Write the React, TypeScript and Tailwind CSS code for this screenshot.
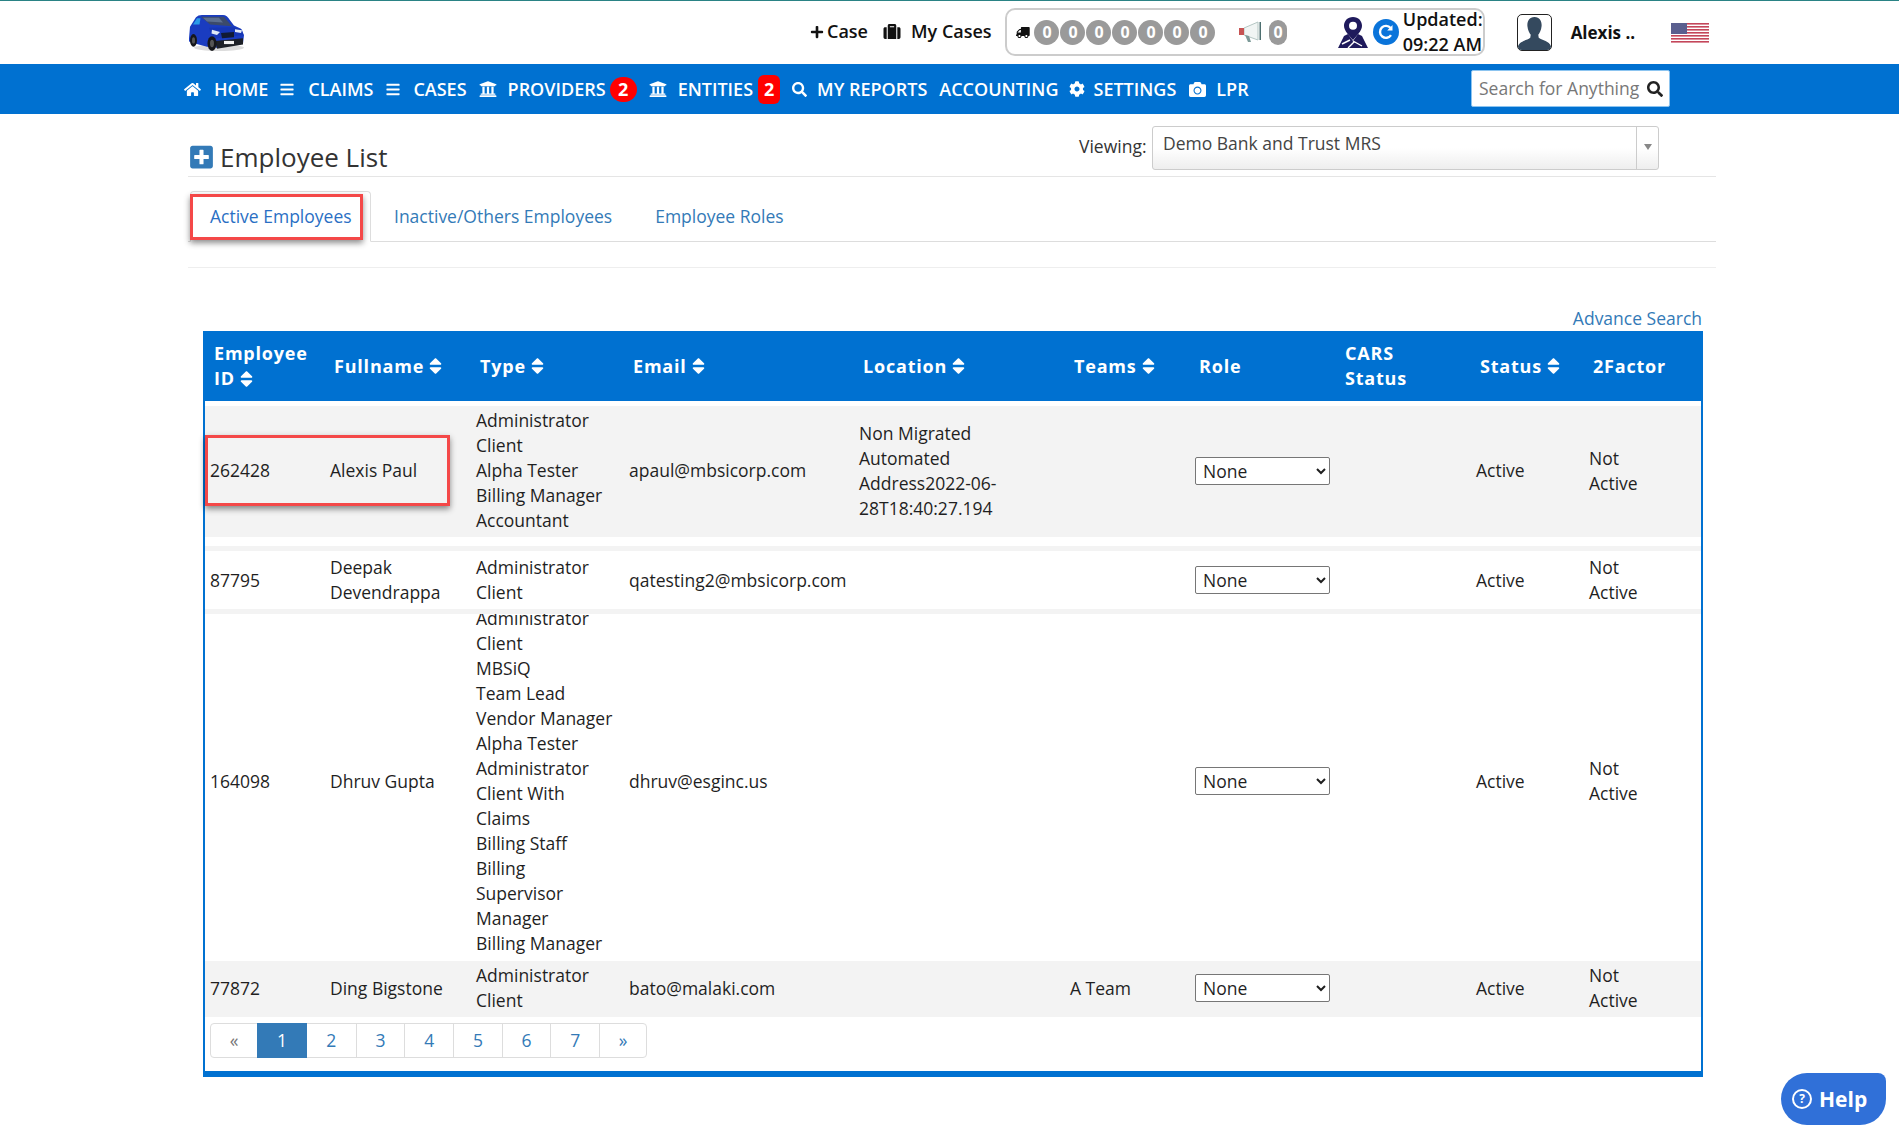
import { FaHome, FaBars, FaUniversity, FaSearch, FaCog, FaCamera, FaPlus, FaSuitcase, FaTruck, FaSort, FaPlusSquare } from 'react-icons/fa';

const rows = [
  {
    id: '262428',
    name: ['Alexis Paul'],
    types: ['Administrator', 'Client', 'Alpha Tester', 'Billing Manager', 'Accountant'],
    email: 'apaul@mbsicorp.com',
    location: ['Non Migrated', 'Automated', 'Address2022-06-', '28T18:40:27.194'],
    team: '',
    outer: 'h-[131px] bg-[#f3f3f3]',
    inner: 'h-[131px]',
  },
  {
    id: '87795',
    name: ['Deepak', 'Devendrappa'],
    types: ['Administrator', 'Client'],
    email: 'qatesting2@mbsicorp.com',
    location: [],
    team: '',
    outer: 'h-[58px] bg-white mt-[9px] border-y-[5px] border-[#f3f3f3] box-content',
    inner: 'h-[58px] pt-[2px]',
  },
  {
    id: '164098',
    name: ['Dhruv Gupta'],
    types: [
      'Administrator', 'Client', 'MBSiQ', 'Team Lead', 'Vendor Manager', 'Alpha Tester', 'Administrator',
      'Client With', 'Claims', 'Billing Staff', 'Billing', 'Supervisor', 'Manager', 'Billing Manager',
    ],
    email: 'dhruv@esginc.us',
    location: [],
    team: '',
    outer: 'h-[347px] bg-white overflow-hidden',
    inner: 'h-[358px] -mt-[11px]',
  },
  {
    id: '77872',
    name: ['Ding Bigstone'],
    types: ['Administrator', 'Client'],
    email: 'bato@malaki.com',
    location: [],
    team: 'A Team',
    outer: 'h-[56px] bg-[#f3f3f3]',
    inner: 'h-[56px]',
  },
];

const cols = 'grid grid-cols-[120px_146px_153px_230px_211px_125px_151px_130px_113px_117px]';

function Lines({ items }: { items: string[] }) {
  return (
    <div>
      {items.map((t, i) => (
        <div key={i}>{t}</div>
      ))}
    </div>
  );
}

function CarLogo() {
  return (
    <svg viewBox="0 0 58 36" preserveAspectRatio="none" className="w-[58px] h-[38px]">
      <ellipse cx="32" cy="32" rx="25" ry="3" fill="#dcdcdc" />
      <path d="M2 23 L3 12 L9 3 Q11 1 15 1 L36 1 Q40 1 43 6 L47 11 L54 14 L57 20 L56 28 L30 32 L20 31 L8 28 L2 26 Z" fill="#1a3cc0" />
      <path d="M14 2.5 L37 2.5 L45 11.5 L23 10 Z" fill="#3b4a6b" />
      <path d="M16 3.5 L32 3.5 L36 8 L20 7 Z" fill="#5c6f90" />
      <path d="M6 10 L10 4 L13.5 4 L12.5 10 Z" fill="#2b9be8" />
      <path d="M22 13 L47 12.5 L55 15 L56 20 L30 23 L24 20 Z" fill="#1636b4" />
      <path d="M25 15 L33 17 L30 20 L24.5 18.5 Z" fill="#dfe8f5" />
      <path d="M48 14.5 L55 15.5 L54 18 L48 17 Z" fill="#e4ecf7" />
      <path d="M34 18 L47 17 L47 22 L35 23 Z" fill="#111a33" />
      <path d="M28 25.5 L56 23 L56 29 L30 33 Z" fill="#1d2027" />
      <rect x="37" y="25.5" width="10" height="3" fill="#f2f2f2" />
      <ellipse cx="6.5" cy="25" rx="3.5" ry="6" fill="#15161a" />
      <ellipse cx="25" cy="28" rx="4.5" ry="7" fill="#15161a" />
      <ellipse cx="25" cy="28" rx="2" ry="3.5" fill="#555" />
      <ellipse cx="6.5" cy="25" rx="1.5" ry="3" fill="#555" />
    </svg>
  );
}

function Bullhorn() {
  return (
    <svg viewBox="0 0 24 22" className="w-[24px] h-[22px]">
      <path d="M6 7 L20 1 L20 19 L6 14 Z" fill="#f1f5f4" stroke="#b5c7c4" strokeWidth="1" />
      <rect x="1" y="7" width="5" height="7" fill="#c75454" />
      <rect x="21.5" y="1" width="1.5" height="18" fill="#4d6f70" />
      <path d="M7 14 L10 21 L13 21 L11 15 Z" fill="#7c9a98" />
    </svg>
  );
}

function MapPin() {
  return (
    <svg viewBox="0 0 30 31" className="w-[30px] h-[31px]">
      <path d="M15 0 C9.5 0 6 4 6 8.8 C6 14 11.5 19 15 23 C18.5 19 24 14 24 8.8 C24 4 20.5 0 15 0 Z" fill="#1f1a5c" />
      <circle cx="15" cy="8.8" r="4" fill="#fff" />
      <path d="M6 19 L10 17 L15 24 L20 17 L24 19 L30 31 L0 31 Z" fill="#1f1a5c" />
      <path d="M4 27 L12 23 M15 24 L24 29 M10 31 L16 25" stroke="#fff" strokeWidth="1.4" fill="none" />
    </svg>
  );
}

function Refresh() {
  return (
    <svg viewBox="0 0 26 26" className="w-[26px] h-[26px]">
      <circle cx="13" cy="13" r="13" fill="#0a74da" />
      <path d="M18 16.2 A6 6 0 1 1 17.6 9" stroke="#fff" strokeWidth="2.4" fill="none" />
      <path d="M19.5 6 L19.5 11.5 L14.2 11.5 Z" fill="#fff" />
    </svg>
  );
}

function Avatar() {
  return (
    <div className="w-[35px] h-[37px] rounded-[5px] border border-[#222] bg-white overflow-hidden">
      <svg viewBox="0 0 35 37" className="w-full h-full">
        <path d="M17.5 2 C11.5 2 9.5 7 10 12 C10.4 16 12 19 13.5 21 L13 24 C9 27 2 27.5 0 33 L0 37 L35 37 L35 33 C33 27.5 26 27 22 24 L21.5 21 C23 19 24.6 16 25 12 C25.5 7 23.5 2 17.5 2 Z" fill="#34495e" />
      </svg>
    </div>
  );
}

function Flag() {
  return (
    <svg viewBox="0 0 38 20" className="w-[38px] h-[20px]">
      <rect width="38" height="20" fill="#fff" />
      {[0, 3, 6, 9, 12, 15, 18].map((y) => (
        <rect key={y} y={y} width="38" height="1.6" fill="#c4465a" />
      ))}
      <rect width="16" height="11" fill="#5a5f8f" />
    </svg>
  );
}

function NavItem({ icon, label, className }: { icon?: React.ReactNode; label: string; className?: string }) {
  return (
    <div className={`flex items-center ${className ?? ''}`}>
      {icon}
      <span>{label}</span>
    </div>
  );
}

function Th({ label, sort, className }: { label: string[]; sort?: boolean; className?: string }) {
  return (
    <div className={`pl-[9px] flex items-center ${className ?? ''}`}>
      <div>
        {label.map((l, i) => (
          <div key={i} className="flex items-center">
            {l}
            {sort && i === label.length - 1 && <FaSort className="w-[13px] h-[20px] ml-[5px]" preserveAspectRatio="none" />}
          </div>
        ))}
      </div>
    </div>
  );
}

export default function App() {
  return (
    <div className="relative w-[1899px] h-[1126px] overflow-hidden bg-white font-['Open_Sans',sans-serif] text-[17.5px] leading-[25px] text-[#1f1f1f]">
      {/* top bar */}
      <header className="h-[64px] border-t border-[#2a8385] flex items-center pl-[187px]">
        <CarLogo />
        <div className="ml-[565px] pb-[2px] flex items-center font-semibold text-[18px] text-[#111]">
          <FaPlus className="w-[14px] h-[14px] mr-[3px]" />
          <span>Case</span>
          <FaSuitcase className="w-[18px] h-[17px] ml-[15px] mr-[10px]" />
          <span>My Cases</span>
        </div>
        <div className="ml-[13px] w-[480px] h-[48px] border-2 border-[#cccccc] rounded-[10px] flex items-center pl-[9px] mt-[-1px]">
          <FaTruck className="w-[20px] h-[17px] text-[#111] -scale-x-100 mr-[5px]" />
          <div className="flex gap-px">
            {[0, 1, 2, 3, 4, 5, 6].map((n) => (
              <div key={n} className="w-[25px] h-[25px] rounded-full bg-[#9a9a9a] text-white font-bold text-[16px] flex items-center justify-center">
                0
              </div>
            ))}
          </div>
          <div className="ml-[23px]"><Bullhorn /></div>
          <div className="ml-[7px] w-[25px] h-[25px] rounded-full bg-[#9a9a9a] text-white font-bold text-[16px] flex items-center justify-center">0</div>
          <div className="ml-[51px]"><MapPin /></div>
          <div className="ml-[5px]"><Refresh /></div>
          <div className="ml-[4px] font-semibold text-[18px] text-[#111] whitespace-nowrap">
            <div>Updated:</div>
            <div>09:22 AM</div>
          </div>
        </div>
        <div className="ml-[32px]"><Avatar /></div>
        <span className="ml-[19px] font-bold text-[17px] text-[#111]">Alexis ..</span>
        <div className="ml-[36px]"><Flag /></div>
      </header>

      {/* main nav */}
      <nav className="h-[50px] bg-[#0071d1] text-white font-semibold text-[18px] flex items-center pl-[184px] relative">
        <NavItem icon={<FaHome className="w-[17px] h-[15px] mr-[13px]" />} label="HOME" />
        <NavItem className="ml-[11px]" icon={<FaBars className="w-[16px] h-[15px] mr-[13px]" />} label="CLAIMS" />
        <NavItem className="ml-[12px]" icon={<FaBars className="w-[16px] h-[15px] mr-[12px]" />} label="CASES" />
        <NavItem className="ml-[11px]" icon={<FaUniversity className="w-[20px] h-[18px] mr-[10px]" />} label="PROVIDERS" />
        <span className="ml-[4px] w-[27px] h-[25px] rounded-full bg-[#f00] font-bold flex items-center justify-center">2</span>
        <NavItem className="ml-[11px]" icon={<FaUniversity className="w-[20px] h-[18px] mr-[10px]" />} label="ENTITIES" />
        <span className="ml-[5px] w-[22px] h-[29px] rounded-[6px] bg-[#f00] font-bold flex items-center justify-center">2</span>
        <NavItem className="ml-[12px]" icon={<FaSearch className="w-[15px] h-[15px] mr-[10px]" />} label="MY REPORTS" />
        <NavItem className="ml-[12px]" label="ACCOUNTING" />
        <NavItem className="ml-[11px]" icon={<FaCog className="w-[16px] h-[16px] mr-[8px]" />} label="SETTINGS" />
        <NavItem className="ml-[12px]" icon={<FaCamera className="w-[19px] h-[17px] mr-[9px]" />} label="LPR" />
        <div className="absolute left-[1471px] top-[6px] w-[199px] h-[37px] bg-white rounded-[2px] border border-[#8cc4f0] flex items-center pl-[7px] pr-[6px] justify-between font-normal text-[17.5px] text-[#777]">
          <span>Search for Anything</span>
          <FaSearch className="w-[16px] h-[16px] text-[#222]" />
        </div>
      </nav>

      <main className="ml-[188px] w-[1528px]">
        {/* title row */}
        <div className="h-[63px] border-b border-[#e5e5e5] flex items-start relative">
          <FaPlusSquare className="ml-[2px] w-[23px] h-[26px] text-[#337ab7] mt-[30px]" />
          <h1 className="ml-[7px] mt-[27px] text-[26px] leading-[32px] text-[#333]">Employee List</h1>
          <div className="absolute left-[891px] top-[20px] flex items-center">
            <span className="text-[#333]">Viewing:</span>
          </div>
          <div className="absolute left-[964px] top-[12px] w-[507px] h-[44px] border border-[#ccc] rounded-[3px] bg-gradient-to-b from-white from-50% to-[#eeeeee] flex">
            <span className="flex-1 pl-[10px] pt-[4px] text-[#444]">Demo Bank and Trust MRS</span>
            <div className="w-[22px] border-l border-[#ccc] flex items-center justify-center pb-[2px]">
              <div className="w-0 h-0 border-x-[4px] border-x-transparent border-t-[6px] border-t-[#888]" />
            </div>
          </div>
        </div>

        {/* tabs */}
        <div className="mt-[14px] h-[51px] border-b border-[#ddd] flex items-stretch pl-[2px]">
          <div className="w-[181px] h-[51px] border border-b-white border-[#ddd] rounded-t-[4px] pl-[19px] pb-[1px] flex items-center text-[#2a6fc4]">Active Employees</div>
          <div className="ml-[23px] flex items-center text-[#337ab7]">Inactive/Others Employees</div>
          <div className="ml-[43px] flex items-center text-[#337ab7]">Employee Roles</div>
        </div>
        <div className="mt-[25px] border-b border-[#eee]" />

        <div className="mt-[38px] h-[25px] w-[1514px] text-right text-[#337ab7]">Advance Search</div>

        {/* table */}
        <div className="ml-[15px] w-[1500px] border-x-2 border-b-[6px] border-[#0071d1] h-[746px]">
          <div className={`${cols} h-[70px] -mx-[2px] px-[2px] bg-[#0071d1] text-white font-bold text-[18px] tracking-[0.8px]`}>
            <Th label={['Employee', 'ID']} sort />
            <Th label={['Fullname']} sort />
            <Th label={['Type']} sort />
            <Th label={['Email']} sort />
            <Th label={['Location']} sort />
            <Th label={['Teams']} sort />
            <Th label={['Role']} />
            <Th label={['CARS', 'Status']} className="-ml-[5px]" />
            <Th label={['Status']} sort />
            <Th label={['2Factor']} />
          </div>
          <div className="mt-[5px]">
            {rows.map((r) => (
              <div key={r.id} className={r.outer}>
                <div className={`${cols} items-center ${r.inner} [&>div]:px-[5px] [&>div]:pb-[2px]`}>
                  <div>{r.id}</div>
                  <div><Lines items={r.name} /></div>
                  <div><Lines items={r.types} /></div>
                  <div>{r.email}</div>
                  <div><Lines items={r.location} /></div>
                  <div>{r.team}</div>
                  <div>
                    <select className="w-[135px] h-[28px] border border-[#767676] rounded-[2px] bg-white pl-[3px] text-[17.5px] text-[#1f1f1f]">
                      <option>None</option>
                    </select>
                  </div>
                  <div />
                  <div>Active</div>
                  <div><Lines items={['Not', 'Active']} /></div>
                </div>
              </div>
            ))}
          </div>
          {/* pagination */}
          <div className="mt-[6px] ml-[5px] w-[437px] h-[35px] flex border border-[#ddd] rounded-[4px] text-[#337ab7]">
            <div className="w-[46px] flex items-center justify-center text-[#777]">«</div>
            <div className="w-[50px] -my-px bg-[#337ab7] text-white flex items-center justify-center">1</div>
            {['2', '3', '4', '5', '6', '7'].map((p, i) => (
              <div key={p} className={`w-[48.7px] flex items-center justify-center ${i > 0 ? 'border-l border-[#ddd]' : ''}`}>
                {p}
              </div>
            ))}
            <div className="flex-1 border-l border-[#ddd] flex items-center justify-center">»</div>
          </div>
        </div>
      </main>

      {/* annotation boxes */}
      <div className="absolute left-[190px] top-[194px] w-[173px] h-[46px] border-[3px] border-[#f44848] shadow-[0_3px_6px_rgba(0,0,0,0.45)]" />
      <div className="absolute left-[205px] top-[435px] w-[245px] h-[71px] border-[3px] border-[#f44848] shadow-[0_3px_6px_rgba(0,0,0,0.45)]" />

      {/* help */}
      <div className="absolute left-[1781px] top-[1073px] w-[105px] h-[52px] bg-[#3070d8] rounded-tl-[26px] rounded-tr-[8px] rounded-br-[26px] rounded-bl-[26px] flex items-center pl-[11px] text-white font-bold text-[21px]">
        <span className="w-[20px] h-[20px] rounded-full border-2 border-white text-[12px] leading-none flex items-center justify-center mr-[7px]">?</span>
        Help
      </div>
    </div>
  );
}
